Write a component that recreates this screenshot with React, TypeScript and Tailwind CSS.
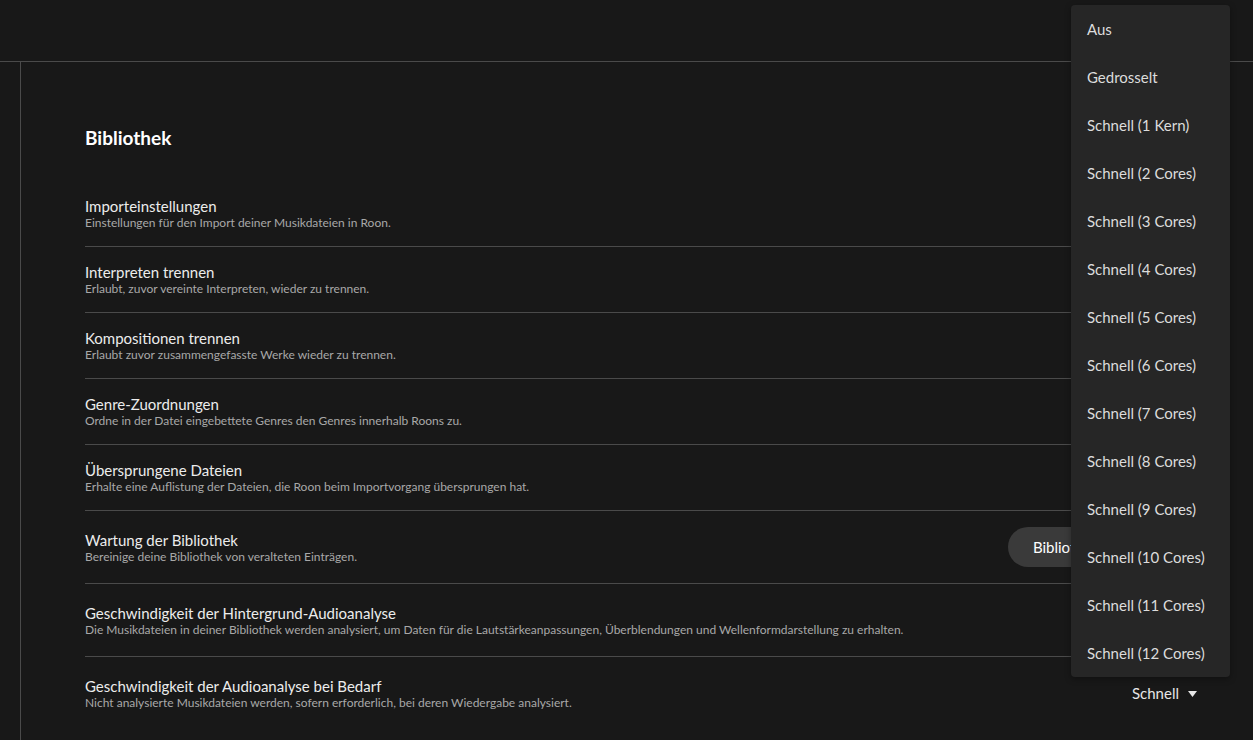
import React from "react";

type Row = {
  title: string;
  sub: string;
  control?: "button" | "select";
};

const rows: Row[] = [
  { title: "Importeinstellungen", sub: "Einstellungen für den Import deiner Musikdateien in Roon." },
  { title: "Interpreten trennen", sub: "Erlaubt, zuvor vereinte Interpreten, wieder zu trennen." },
  { title: "Kompositionen trennen", sub: "Erlaubt zuvor zusammengefasste Werke wieder zu trennen." },
  { title: "Genre-Zuordnungen", sub: "Ordne in der Datei eingebettete Genres den Genres innerhalb Roons zu." },
  { title: "Übersprungene Dateien", sub: "Erhalte eine Auflistung der Dateien, die Roon beim Importvorgang übersprungen hat." },
  { title: "Wartung der Bibliothek", sub: "Bereinige deine Bibliothek von veralteten Einträgen.", control: "button" },
  {
    title: "Geschwindigkeit der Hintergrund-Audioanalyse",
    sub: "Die Musikdateien in deiner Bibliothek werden analysiert, um Daten für die Lautstärkeanpassungen, Überblendungen und Wellenformdarstellung zu erhalten.",
    control: "select",
  },
  {
    title: "Geschwindigkeit der Audioanalyse bei Bedarf",
    sub: "Nicht analysierte Musikdateien werden, sofern erforderlich, bei deren Wiedergabe analysiert.",
    control: "select",
  },
];

const menuItems = [
  "Aus",
  "Gedrosselt",
  "Schnell (1 Kern)",
  "Schnell (2 Cores)",
  "Schnell (3 Cores)",
  "Schnell (4 Cores)",
  "Schnell (5 Cores)",
  "Schnell (6 Cores)",
  "Schnell (7 Cores)",
  "Schnell (8 Cores)",
  "Schnell (9 Cores)",
  "Schnell (10 Cores)",
  "Schnell (11 Cores)",
  "Schnell (12 Cores)",
];

function Select() {
  return (
    <div className="h-10 flex items-center gap-[9px] text-[15px] text-[#e6e6e6]">
      <span>Schnell</span>
      <svg width="9" height="6" viewBox="0 0 9 6" className="mt-[2px]">
        <path d="M0 0 L9 0 L4.5 6 Z" fill="#e6e6e6" />
      </svg>
    </div>
  );
}

export default function App() {
  return (
    <div
      className="relative h-[740px] w-full overflow-hidden bg-[#181818] text-white"
      style={{ fontFamily: "Lato, 'Open Sans', sans-serif" }}
    >
      <div className="h-[62px] border-b border-[#4a4a4a]" />
      <div className="flex h-[678px]">
        <div className="w-[21px] shrink-0 border-r border-[#4a4a4a]" />
        <div className="flex-1 pl-[64px] pr-[56px] pt-[64px]">
          <h1 className="text-[19px] leading-[24px] font-bold text-white mb-[31px]">Bibliothek</h1>
          {rows.map((r, i) => (
            <div
              key={r.title}
              className={
                i === rows.length - 1
                  ? "flex items-center justify-between py-4"
                  : "flex items-center justify-between py-4 border-b border-[#4a4a4a]"
              }
            >
              <div className="flex flex-col">
                <div className="text-[15px] leading-[18px] text-[#ececec]">{r.title}</div>
                <div className="text-[12px] leading-[15px] text-[#a8a8a8]">{r.sub}</div>
              </div>
              {r.control === "button" && (
                <div className="h-10 rounded-full bg-[#3a3a3a] pl-[25px] pr-[25px] flex items-center text-[15px] text-white whitespace-nowrap">
                  Bibliothek bereinigen
                </div>
              )}
              {r.control === "select" && <Select />}
            </div>
          ))}
        </div>
      </div>

      <div className="absolute left-[1071px] top-[5px] w-[159px] rounded-[4px] bg-[#262626] shadow-[0_2px_6px_rgba(0,0,0,0.35)]">
        {menuItems.map((m) => (
          <div key={m} className="h-12 px-4 flex items-center text-[15px] text-[#dcdcdc] whitespace-nowrap">
            {m}
          </div>
        ))}
      </div>
    </div>
  );
}
